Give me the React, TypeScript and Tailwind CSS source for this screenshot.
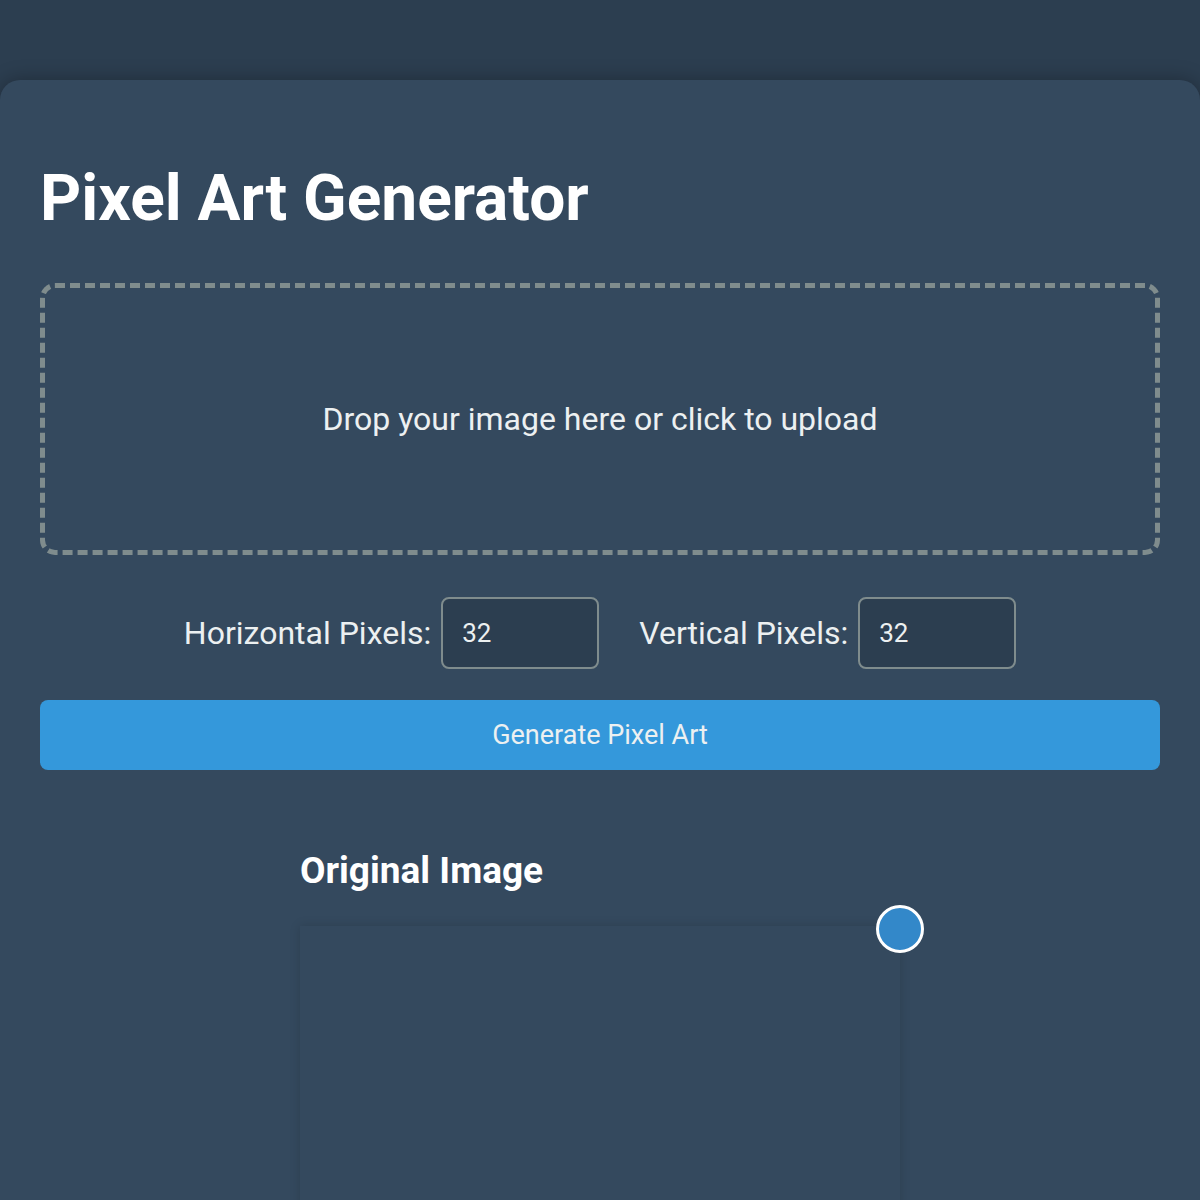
import * as React from 'react';

function PixelInput({ label, value }: { label: string; value: string }) {
  return (
    <label className="flex items-center gap-[10px]">
      <span className="text-[32px] leading-none">{label}</span>
      <input
        type="number"
        defaultValue={value}
        className="h-[72px] w-[158px] rounded-lg border-2 border-[#7f8c8d] bg-[#2c3e50] px-[19px] text-[26px] text-[#ecf0f1] outline-none [appearance:textfield]"
      />
    </label>
  );
}

export default function App() {
  return (
    <div className="min-h-screen bg-[#2c3e50] pt-20 font-['Roboto',sans-serif] text-[#ecf0f1]">
      <div className="mx-auto max-w-[1200px] rounded-[20px] bg-[#34495e] px-10 pb-10 pt-[40px] shadow-[0_0_20px_rgba(0,0,0,0.3)]">
        <h1 className="mt-[41px] text-[64px] font-bold leading-[75px] text-white">
          Pixel Art Generator
        </h1>

        <div className="mt-[47px] flex h-[272px] cursor-pointer items-center justify-center rounded-[15px] border-[5px] border-dashed border-[#7f8c8d]">
          <p className="text-[32px]">Drop your image here or click to upload</p>
        </div>

        <div className="mt-[42px] flex items-center justify-center gap-10">
          <PixelInput label="Horizontal Pixels:" value="32" />
          <PixelInput label="Vertical Pixels:" value="32" />
        </div>

        <button className="mt-[31px] flex h-[70px] w-full items-center justify-center rounded-lg bg-[#3498db] text-[27px] text-[#ecf0f1]">
          Generate Pixel Art
        </button>

        <div className="mx-auto mt-[79px] w-[600px]">
          <h2 className="text-[37px] font-bold leading-[43px] text-white">Original Image</h2>
          <div className="relative mt-[34px] h-[600px] w-full bg-[#34495e] shadow-[0_0_10px_rgba(0,0,0,0.15)]">
            <div className="absolute -right-[24px] -top-[21px] h-[48px] w-[48px] rounded-full border-[3px] border-white bg-[#3388c9]" />
          </div>
        </div>
      </div>
    </div>
  );
}
